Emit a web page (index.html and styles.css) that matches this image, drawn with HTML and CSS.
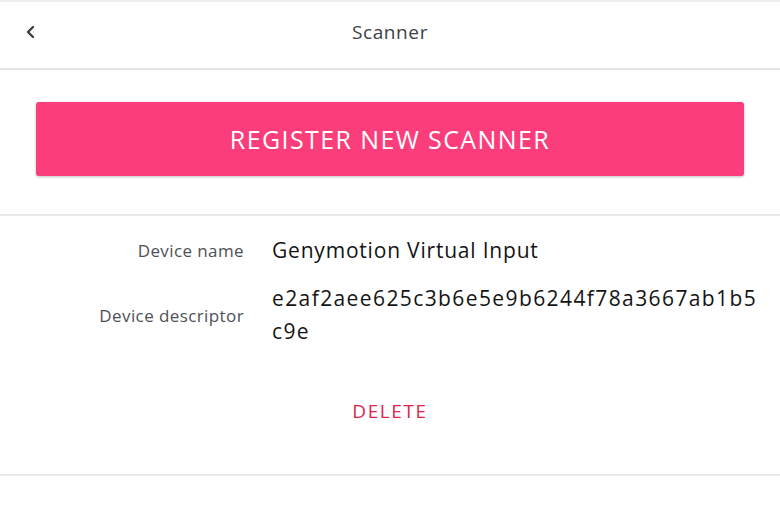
FILE: index.html
```html
<!DOCTYPE html>
<html>
  <head>
    <meta charset="UTF-8" />
    <title>Scanner</title>
    <link rel="stylesheet" href="styles.css">
  </head>
  <body>
    <!-- Top navigation bar -->
    <div id="nav-bar">
      <div class="back-button">
        <svg width="12" height="14" viewBox="0 0 12 14">
          <path d="M8 2 L3 7 L8 12" fill="none" stroke="#3a3f44" stroke-width="2.4" stroke-linecap="round" stroke-linejoin="round" />
        </svg>
      </div>
      <div class="nav-title">Scanner</div>
      <div class="nav-spacer"></div>
    </div>

    <!-- Register section -->
    <div id="register">
      <button class="register-button">REGISTER NEW SCANNER</button>
    </div>

    <!-- Scanner details -->
    <div id="details">
      <div class="detail-row">
        <div class="detail-label">Device name</div>
        <div class="detail-value">Genymotion Virtual Input</div>
      </div>
      <div class="detail-row">
        <div class="detail-label">Device descriptor</div>
        <div class="detail-value descriptor">e2af2aee625c3b6e5e9b6244f78a3667ab1b5c9e</div>
      </div>
      <div class="delete-row">
        <button class="delete-button">DELETE</button>
      </div>
    </div>
  </body>
</html>
```

FILE: styles.css
```css
body {
  margin: 0;
  padding: 0;
  background-color: #ffffff;
  font-family: 'Open Sans', 'Noto Sans', sans-serif;
  border-top: 2px solid #eeeeee;
}

/* Navigation bar */
#nav-bar {
  height: 66px;
  display: flex;
  align-items: center;
  border-bottom: 2px solid #e3e3e3;
}

.back-button {
  width: 62px;
  display: flex;
  justify-content: center;
  padding-bottom: 7px;
}

.nav-title {
  flex-grow: 1;
  text-align: center;
  font-size: 19px;
  letter-spacing: 0.6px;
  color: #3c4146;
  padding-bottom: 6px;
}

.nav-spacer {
  width: 62px;
}

/* Register button */
#register {
  padding: 32px 36px 38px;
  border-bottom: 2px solid #e8e8e8;
}

.register-button {
  display: block;
  width: 100%;
  height: 74px;
  border: none;
  border-radius: 3px;
  background-color: #fb3d7b;
  color: #ffffff;
  font-family: inherit;
  font-size: 25px;
  letter-spacing: 1.4px;
  box-shadow: 0 1px 3px rgba(0, 0, 0, 0.25);
}

/* Details */
#details {
  padding-top: 18px;
  border-bottom: 2px solid #e8e8e8;
}

.detail-row {
  display: grid;
  grid-template-columns: 244px 1fr;
  column-gap: 28px;
  align-items: center;
  padding-right: 18px;
  margin-bottom: 15px;
}

.detail-label {
  text-align: right;
  font-size: 17px;
  letter-spacing: 0.4px;
  color: #4d5156;
}

.detail-value {
  font-size: 21px;
  letter-spacing: 0.8px;
  line-height: 33px;
  color: #141414;
}

.descriptor {
  letter-spacing: 1.4px;
  word-break: break-all;
}

.delete-row {
  display: flex;
  justify-content: center;
  padding: 26px 0 41px;
}

.delete-button {
  border: none;
  background: none;
  height: 44px;
  padding: 0 16px;
  font-family: inherit;
  font-size: 19px;
  letter-spacing: 1.6px;
  color: #e0244f;
}
```
